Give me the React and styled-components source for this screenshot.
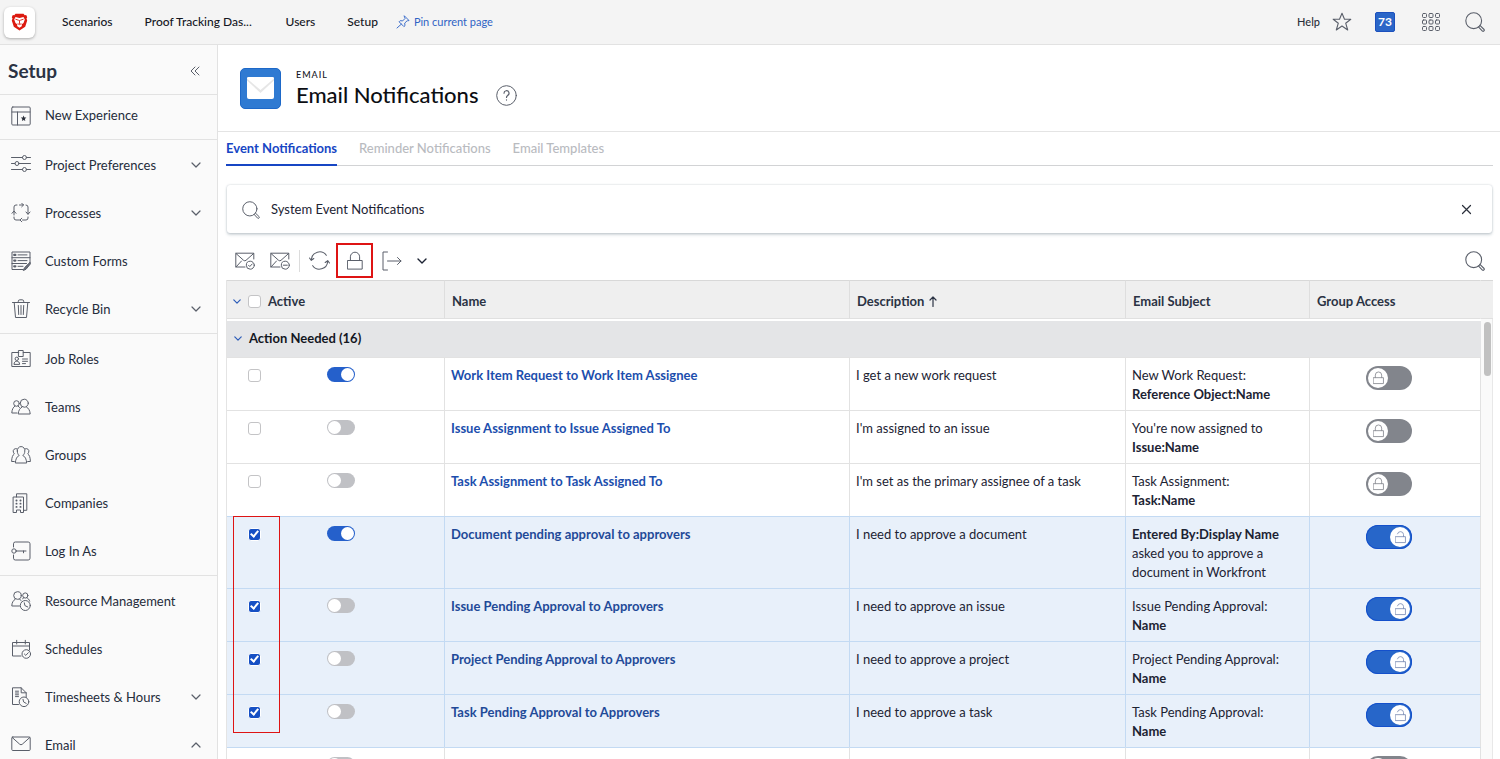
import React from "react";
import styled, { createGlobalStyle, css } from "styled-components";

const GlobalStyle = createGlobalStyle`
  *, *::before, *::after { box-sizing: border-box; }
  body {
    margin: 0;
    background: #fff;
    color: #1c2333;
    font-family: Lato, "Liberation Sans", sans-serif;
    font-size: 13px;
    line-height: 19px;
  }
  button, input { font: inherit; color: inherit; }
  h1, h2, p, ul { margin: 0; padding: 0; }
  ul { list-style: none; }
`;

/* ---------- shell ---------- */

const Shell = styled.div`
  display: flex;
  flex-direction: column;
  height: 100vh;
  overflow: hidden;
`;

const Body = styled.div`
  display: flex;
  flex: 1;
  min-height: 0;
`;

const IconButton = styled.button`
  display: inline-flex;
  align-items: center;
  justify-content: center;
  padding: 0;
  border: 0;
  background: none;
  cursor: pointer;
`;

const Glyph = styled.svg`
  display: block;
  flex: none;
  width: ${(p) => p.$w || 20}px;
  height: ${(p) => p.$h || p.$w || 20}px;
  fill: none;
  stroke: ${(p) => p.$color || "#5a5f6a"};
  stroke-width: ${(p) => p.$weight || 1};
  stroke-linecap: round;
  stroke-linejoin: round;
`;

/* ---------- top bar ---------- */

const TopBar = styled.header`
  display: flex;
  flex: none;
  align-items: center;
  height: 45px;
  padding: 0 15px 0 4px;
  border-bottom: 1px solid #e2e2e2;
  background: #f4f4f4;
`;

const Brand = styled.a`
  display: flex;
  align-items: center;
  justify-content: center;
  width: 31px;
  height: 31px;
  margin-right: 27px;
  border-radius: 6px;
  background: #fff;
  box-shadow: 0 1px 3px rgba(0, 0, 0, 0.3);
`;

const TopNav = styled.nav`
  display: flex;
  align-items: center;
  gap: 32px;
  margin-right: 18px;
`;

const TopLink = styled.a`
  min-width: ${(p) => (p.$wide ? 109 : 28)}px;
  color: #14171f;
  font-size: 12px;
  font-weight: 500;
  line-height: 16px;
  text-decoration: none;
  white-space: nowrap;
`;

const PinButton = styled(IconButton)`
  gap: 4px;
  color: #2f63c4;
  font-size: 11px;
  line-height: 16px;
`;

const TopTools = styled.div`
  display: flex;
  align-items: center;
  margin-left: auto;
`;

const HelpLink = styled.a`
  margin-right: 12px;
  color: #2b303b;
  font-size: 11px;
  font-weight: 500;
  line-height: 16px;
  text-decoration: none;
`;

const CountBadge = styled.button`
  width: 20px;
  height: 20px;
  margin: 0 26px 0 23px;
  padding: 0;
  border: 1px solid #1c50bd;
  border-radius: 2px;
  background: #2a66c8;
  color: #fff;
  font-size: 12px;
  font-weight: 700;
  line-height: 18px;
`;

const SearchButton = styled(IconButton)`
  margin-left: 24px;
`;

/* ---------- side bar ---------- */

const SideBar = styled.aside`
  flex: none;
  width: 218px;
  overflow: hidden;
  border-right: 1px solid #e2e2e2;
  background: #fafafa;
`;

const SideHead = styled.div`
  display: flex;
  align-items: center;
  justify-content: space-between;
  height: 50px;
  padding: 2px 17px 0 8px;
  border-bottom: 1px solid #e2e2e2;
`;

const SideTitle = styled.h2`
  color: #2b3344;
  font-size: 19px;
  font-weight: 700;
  line-height: 24px;
`;

const SideGroup = styled.ul`
  padding: ${(p) => (p.$compact ? "0 0 3px" : "1px 0 0")};

  & + & {
    border-top: 1px solid #e2e2e2;
  }
`;

const SideLink = styled.a`
  display: flex;
  align-items: center;
  gap: 14px;
  height: ${(p) => (p.$compact ? 41 : 48)}px;
  padding: 0 16px 0 11px;
  color: #252c3b;
  text-decoration: none;
`;

const SideLabel = styled.span`
  flex: 1;
  white-space: nowrap;
`;

/* ---------- page head and tabs ---------- */

const Main = styled.main`
  display: flex;
  flex: 1;
  flex-direction: column;
  min-width: 0;
`;

const PageHead = styled.div`
  display: flex;
  flex: none;
  align-items: center;
  gap: 15px;
  height: 87px;
  padding: 0 22px;
  border-bottom: 1px solid #e4e4e4;
`;

const PageIcon = styled.div`
  display: flex;
  align-items: center;
  justify-content: center;
  width: 41px;
  height: 41px;
  border: 1px solid #1d68c8;
  border-radius: 5px;
  background: #2f7ad2;
`;

const TitleRow = styled.div`
  display: flex;
  align-items: center;
  gap: 18px;
`;

const Eyebrow = styled.p`
  color: #14171f;
  font-size: 9px;
  font-weight: 500;
  letter-spacing: 1px;
  line-height: 14px;
`;

const PageTitle = styled.h1`
  color: #0c0e13;
  font-size: 22px;
  font-weight: 500;
  line-height: 26px;
`;

const Content = styled.div`
  display: flex;
  flex: 1;
  flex-direction: column;
  min-height: 0;
  padding: 0 7px 0 8px;
`;

const Tabs = styled.div`
  display: flex;
  flex: none;
  gap: 22px;
  height: 34px;
  border-bottom: 1px solid #d2d3d5;
`;

const Tab = styled.button`
  height: 34px;
  padding: 0;
  border: 0;
  border-bottom: 2px solid ${(p) => (p["aria-selected"] ? "#1746c4" : "transparent")};
  background: none;
  color: ${(p) => (p["aria-selected"] ? "#1746c4" : "#b9bbbf")};
  font-weight: ${(p) => (p["aria-selected"] ? 700 : 500)};
`;

/* ---------- filter card and toolbar ---------- */

const FilterCard = styled.label`
  display: flex;
  flex: none;
  align-items: center;
  gap: 11px;
  height: 48px;
  margin: 19px 1px 0;
  padding: 1px 20px 0 15px;
  border-radius: 3px;
  background: #fff;
  box-shadow: 0 0 2px rgba(60, 80, 100, 0.3), 0 2px 3px rgba(60, 80, 100, 0.22);
`;

const FilterInput = styled.input`
  flex: 1;
  min-width: 0;
  padding: 0;
  border: 0;
  outline: 0;
  background: none;
`;

const Toolbar = styled.div`
  display: flex;
  flex: none;
  align-items: center;
  height: 47px;
  padding: 8px 8px 0 9px;
`;

const ToolGroup = styled.div`
  display: flex;
  align-items: center;
  gap: 15px;
`;

const Divider = styled.span`
  width: 1px;
  height: 22px;
  margin: 0 9px;
  background: #dcdcdc;
`;

const LockButton = styled(IconButton)`
  width: 37px;
  height: 35px;
  margin: 0 9px 0 6px;
  border: 2px solid #de1414;
`;

const RightSlot = styled.div`
  display: flex;
  margin-left: auto;
`;

/* ---------- grid ---------- */

const GridArea = styled.div`
  display: flex;
  flex: 1;
  min-height: 0;
  overflow: hidden;
`;

const Table = styled.table`
  flex: 1;
  align-self: flex-start;
  width: 100%;
  table-layout: fixed;
  border-spacing: 0;
  border-left: 1px solid #e4e4e4;
`;

const Col = styled.col`
  width: ${(p) => (p.$width ? `${p.$width}px` : "auto")};
`;

const HeadCell = styled.th`
  height: 39px;
  padding: 3px 7px 0 ${(p) => (p.$first ? 6 : 7)}px;
  border-top: 1px solid #d8d8d8;
  border-right: 1px solid ${(p) => (p.$last ? "#efefef" : "#dedede")};
  border-bottom: 1px solid #e0e0e0;
  background: #efefef;
  color: #2b3344;
  font-weight: 700;
  text-align: left;
`;

const HeadInner = styled.div`
  display: flex;
  align-items: center;
  gap: ${(p) => p.$gap || 5}px;
`;

const GroupCell = styled.th`
  height: 38px;
  padding: 0 7px 2px;
  border-top: 2px solid #fff;
  background: #e4e5e7;
  color: #14171f;
  font-weight: 700;
  text-align: left;
`;

const Cell = styled.td`
  position: relative;
  padding: 8px 6px 6px;
  border-top: 1px solid #e2e2e2;
  border-right: 1px solid #e2e2e2;
  vertical-align: top;
`;

const NameLink = styled.a`
  color: #1c4ead;
  font-weight: 700;
  text-decoration: none;
`;

const Row = styled.tr`
  ${(p) =>
    p["aria-selected"] &&
    css`
      background: #e8f0fa;

      & > ${Cell} {
        border-top-color: #c3daf3;
      }
      & > ${Cell}:not(:last-child) {
        border-right-color: #c3daf3;
      }
      & + tr > ${Cell} {
        border-top-color: #c3daf3;
      }
      & ${NameLink} {
        color: #1f4a98;
      }
    `}
`;

const ActiveControls = styled.div`
  display: flex;
  align-items: flex-start;
  gap: 66px;
  padding: 1px 0 0 15px;
`;

const Tick = styled.input.attrs({ type: "checkbox" })`
  appearance: none;
  display: block;
  flex: none;
  width: 13px;
  height: 13px;
  margin: ${(p) => (p.$inRow ? "2px 0 0" : "0")};
  border: 1px solid #c4c4c6;
  border-radius: 3px;
  background: #fff;

  &:checked {
    border-color: #fff;
    background: #1650c4;
  }

  &:checked::after {
    content: "";
    display: block;
    width: 5px;
    height: 8px;
    margin: 0 auto;
    border: solid #fff;
    border-width: 0 2px 2px 0;
    transform: rotate(40deg);
  }
`;

const Switch = styled.input.attrs({ type: "checkbox", role: "switch" })`
  appearance: none;
  display: flex;
  justify-content: flex-start;
  flex: none;
  width: 28px;
  height: 15px;
  margin: 0;
  padding: 1px;
  border-radius: 8px;
  background: #c0c1c5;

  &::before {
    content: "";
    width: 13px;
    height: 13px;
    border-radius: 50%;
    background: #fff;
  }

  &:checked {
    justify-content: flex-end;
    background: #2560cb;
  }
`;

const AccessLabel = styled.label`
  display: grid;
  width: 46px;
  margin-left: 50px;
`;

const AccessInput = styled.input.attrs({ type: "checkbox", role: "switch" })`
  appearance: none;
  grid-area: 1 / 1;
  width: 46px;
  height: 24px;
  margin: 0;
  border-radius: 12px;
  background: #82858c;

  &:checked {
    background: #2766c9;
    box-shadow: inset 0 0 0 1px #1450cb;
  }
`;

const Knob = styled.span`
  display: flex;
  align-items: center;
  justify-content: center;
  grid-area: 1 / 1;
  align-self: center;
  justify-self: ${(p) => (p.$on ? "end" : "start")};
  width: 20px;
  height: 20px;
  margin: 0 2px;
  border-radius: 50%;
  background: #fff;
`;

const SelectionFrame = styled.div`
  position: absolute;
  z-index: 1;
  top: -1px;
  left: 6px;
  width: 47px;
  height: 217px;
  border: 1px solid #de1414;
  pointer-events: none;
`;

const Rail = styled.div`
  display: flex;
  flex: none;
  flex-direction: column;
  width: 12px;
`;

const RailCap = styled.div`
  height: 39px;
  border-top: 1px solid #d8d8d8;
  border-bottom: 1px solid #e0e0e0;
  background: #efefef;
`;

const RailTrack = styled.div`
  flex: 1;
  padding: 3px 0 0 3px;
  border-right: 1px solid #e8e8e8;
  background: #fafafa;
`;

const RailThumb = styled.div`
  width: 7px;
  height: 54px;
  border-radius: 4px;
  background: #c1c1c1;
`;

/* ---------- icons ---------- */

const Chevron = ({ up, small, color, weight }) => (
  <Glyph $w={small ? 8 : 10} $h={small ? 5 : 6} $color={color} $weight={weight || 1.2} viewBox="0 0 10 6">
    <path d={up ? "M1 5 5 1l4 4" : "M1 1l4 4 4-4"} />
  </Glyph>
);

const SearchIcon = ({ size = 20 }) => (
  <Glyph $w={size} viewBox="0 0 20 20" $weight={1.1}>
    <circle cx="8.7" cy="8.7" r="7.9" />
    <path d="M14.9 13.4l4.2 4.1a1.2 1.2 0 0 1-1.7 1.6l-4-4.3" />
  </Glyph>
);

const LockIcon = ({ w = 16, h = 20, open, color, weight }) => (
  <Glyph $w={w} $h={h} viewBox="0 0 16 20" $color={color} $weight={weight}>
    <rect x="0.8" y="9.5" width="14.4" height="8.6" />
    <path d={open ? "M3.6 5.4a4.5 4.5 0 0 1 8.8.9v3.2" : "M3.4 9.5V5.800a4.600 4.600 0 0 1 9.200 0v3.700"} />
  </Glyph>
);

const sideIcons = {
  experience: (
    <>
      <rect x="0.8" y="1" width="18.4" height="18" rx="1" />
      <path d="M1 6h18M6.5 6v13" />
      <path d="M12.6 9.6l.8 1.8 2 .2-1.5 1.4.4 2-1.7-1-1.7 1 .4-2-1.5-1.4 2-.2z" fill="#2b303b" stroke="none" />
    </>
  ),
  sliders: (
    <>
      <path d="M.5 2.500h11M15.500 2.500h4M.5 8.500H4M8 8.500h11.500M.5 14.500h11M15.500 14.500h4" />
      <circle cx="13.5" cy="2.5" r="2" />
      <circle cx="6" cy="8.5" r="2" />
      <circle cx="13.5" cy="14.5" r="2" />
    </>
  ),
  cycle: (
    <>
      <path d="M3 12V4a2 2 0 0 1 2-2h1M1 10.300 3 8l2 2.300" />
      <path d="M8.500 2h4M10.700.200 12.500 2l-1.800 1.800M15 2a2 2 0 0 1 2 2v7M15 9l2 2.300L19 9" />
      <path d="M17 14v1a2 2 0 0 1-2 2h-3.500M9 17H5a2 2 0 0 1-2-2v-1M10.800 15.200 9 17l1.800 1.800" />
    </>
  ),
  forms: (
    <>
      <path d="M12 18.5H1V1h18v11M1 6.7h18M1 12.5h14.5M7 3.900h9M7 9.600h9M7 15.300h5" />
      <path d="M3.200 3.900h1.200M3.200 9.600h1.200M3.200 15.300h1.200" strokeWidth="2.2" />
      <path d="M18.800 11.500l-5.300 5.200-1.200 2.800 2.700-1.200 4.300-5.300z" fill="#6a6f7a" />
    </>
  ),
  trash: (
    <path d="M1.500 3.500h17M7.300 3.500V2.200A1.500 1.500 0 0 1 8.800.8h2.400a1.500 1.500 0 0 1 1.500 1.400v1.300M3.200 3.500l1.300 15h11l1.300-15M7.300 6.500l.4 9M10 6.500v9M12.700 6.500l-.4 9" />
  ),
  badge: (
    <>
      <path d="M7.800 3.500H.8v14h18.400v-14h-7" />
      <rect x="7.800" y="1.500" width="4.4" height="6" />
      <circle cx="5.8" cy="9.8" r="1.7" />
      <path d="M3 15c.2-2 1.300-2.800 2.800-2.800S8.400 13 8.600 15zM11.500 10h5M11.500 12.300h5M11.500 14.600h3" />
    </>
  ),
  team: (
    <>
      <circle cx="13.3" cy="6.2" r="4" />
      <path d="M11 10c-2.300 1.300-3.500 3.600-3.800 7h12c-.3-3.400-1.400-5.700-3.700-7" />
      <circle cx="5.5" cy="6.5" r="2.8" />
      <path d="M6 16H.8c.2-3.500 1.200-5.500 3.100-7M7 9l1.500 1.500" />
    </>
  ),
  group: (
    <>
      <path d="M6.300 6a3.800 3.800 0 1 1 7.500 0c0 2-.8 3.600-2 4.500 2.400 1 3.500 3.500 3.900 7.500H4.300c.4-4 1.500-6.500 3.900-7.500C7 9.600 6.300 8 6.300 6z" />
      <path d="M5.800 3.800a2.600 2.600 0 0 0-3.400 3.400c.3.9.6 1.300 1 1.700C1.700 10 .8 12 .6 16.500h2.700M14.300 3.800a2.600 2.600 0 0 1 3.400 3.400c-.3.9-.6 1.300-1 1.700 1.700 1.100 2.500 3.100 2.700 7.600h-2.700" />
    </>
  ),
  building: (
    <>
      <path d="M2.500 4h10v15.500H9.500V17h-4v2.500h-3zM5.500 4V.8h10.300v16.500h-3" />
      <path d="M5.400 7.500h.2M9.400 7.500h.2M5.400 10.700h.2M9.400 10.700h.2M5.400 13.900h.2M9.400 13.900h.2" strokeWidth="1.8" />
    </>
  ),
  key: (
    <>
      <path d="M2.500 6V2.800A1.800 1.800 0 0 1 4.300 1h12.900A1.800 1.800 0 0 1 19 2.800v14.400a1.800 1.800 0 0 1-1.800 1.800H4.300a1.800 1.800 0 0 1-1.800-1.800V14M5.500 10H15M12.500 10v1.800" />
      <circle cx="3" cy="10" r="2.2" />
    </>
  ),
  resource: (
    <>
      <circle cx="6.5" cy="4.5" r="3.8" />
      <path d="M8.500 15H.8c.1-3.400 1.300-5.400 3.500-6.900M8.500 8.100l1.700 1.500" />
      <circle cx="14.3" cy="4.5" r="2.6" />
      <path d="M15.800 6.800c1.500.7 2.400 1.700 2.900 3.400M12.800 6.800l-1.200.9" />
      <circle cx="14.3" cy="14.5" r="5" />
      <path d="M13.300 11.800l.6 2.800 2.900 1.400" />
    </>
  ),
  calendar: (
    <>
      <path d="M10 17H1.500V3.500h17V11M1.500 7h17M5.700 1.300V5M14.300 1.300V5" />
      <circle cx="15.3" cy="15" r="4.3" />
      <path d="M13.400 15l1.400 1.400 2.500-2.700" />
    </>
  ),
  timesheet: (
    <>
      <path d="M7.500 17.500h-6V.8h8.700l5 5v4.500M10.200.8v5h5M4.500 4.200h3M4.500 6h3M4.500 7.800h3M4.500 9.600h3" />
      <circle cx="13" cy="14.8" r="4.8" />
      <path d="M12 12.300l.6 2.600 2.600 1.500" />
    </>
  ),
  mail: (
    <>
      <rect x="0.8" y="2" width="18.4" height="13.5" rx="1" />
      <path d="M1.200 2.500 8.700 9.200a1.900 1.900 0 0 0 2.600 0l7.500-6.700" />
    </>
  ),
};

const MailAction = ({ kind }) => (
  <Glyph $w={20} $h={18} viewBox="0 0 20 18">
    <path d="M10 15H.8V1.200h18V7M1 1.500l7.600 6.800a1.800 1.800 0 0 0 2.400 0l7.600-6.800M1 15l5.500-6" />
    <circle cx="15.3" cy="13.2" r="4" />
    <path d={kind === "check" ? "M13.500 13.200l1.300 1.300 2.400-2.500" : "M13.300 13.200h4"} />
  </Glyph>
);

/* ---------- data ---------- */

const sideGroups = [
  [["New Experience", "experience"]],
  [
    ["Project Preferences", "sliders", "down"],
    ["Processes", "cycle", "down"],
    ["Custom Forms", "forms"],
    ["Recycle Bin", "trash", "down"],
  ],
  [
    ["Job Roles", "badge"],
    ["Teams", "team"],
    ["Groups", "group"],
    ["Companies", "building"],
    ["Log In As", "key"],
  ],
  [
    ["Resource Management", "resource"],
    ["Schedules", "calendar"],
    ["Timesheets & Hours", "timesheet", "down"],
    ["Email", "mail", "up"],
  ],
];

const rows = [
  { name: "Work Item Request to Work Item Assignee", text: "I get a new work request", subject: <>New Work Request:<br /><b>Reference Object:Name</b></>, active: true },
  { name: "Issue Assignment to Issue Assigned To", text: "I'm assigned to an issue", subject: <>You're now assigned to<br /><b>Issue:Name</b></> },
  { name: "Task Assignment to Task Assigned To", text: "I'm set as the primary assignee of a task", subject: <>Task Assignment:<br /><b>Task:Name</b></> },
  { name: "Document pending approval to approvers", text: "I need to approve a document", subject: <><b>Entered By:Display Name</b><br />asked you to approve a<br />document in Workfront</>, active: true, selected: true, framed: true },
  { name: "Issue Pending Approval to Approvers", text: "I need to approve an issue", subject: <>Issue Pending Approval:<br /><b>Name</b></>, selected: true },
  { name: "Project Pending Approval to Approvers", text: "I need to approve a project", subject: <>Project Pending Approval:<br /><b>Name</b></>, selected: true },
  { name: "Task Pending Approval to Approvers", text: "I need to approve a task", subject: <>Task Pending Approval:<br /><b>Name</b></>, selected: true },
  {},
];

/* ---------- parts ---------- */

const TopBarPart = () => (
  <TopBar>
    <Brand href="#" aria-label="Home">
      <Glyph $w={17} $h={18} viewBox="0 0 17 18">
        <path d="M4.500.8h8l1.200 1.400 1.500-.2 1 2.300-.7 1.300.7 1.800-2 6.300L8.500 17.500l-5.700-3.800-2-6.300.7-1.800-.7-1.300 1-2.300 1.500.2z" fill="#dc1a10" stroke="none" />
        <path d="M4.500 4l4 1 4-1 1.300 2.500-1.300 3.500-2 1.500.5 1.500-2.500 1.700L6 13l.5-1.500-2-1.500L3.200 6.500z" fill="#fff" stroke="none" />
        <path d="M4.800 6.300l2.700.9M12.200 6.300l-2.700.9M7 10.800l1.500.8 1.500-.8M8.500 7.500v3" stroke="#dc1a10" strokeWidth="0.9" />
      </Glyph>
    </Brand>
    <TopNav>
      <TopLink href="#">Scenarios</TopLink>
      <TopLink href="#" $wide>Proof Tracking Das...</TopLink>
      <TopLink href="#">Users</TopLink>
      <TopLink href="#">Setup</TopLink>
    </TopNav>
    <PinButton>
      <Glyph $w={14} $color="#3d6ecb" viewBox="0 0 14 14">
        <path d="M8.500 1 13 5.500l-1.300.4-.4-.3-2.600 2.500.3 2.500-1.100 1L3.100 6.800l1.100-1.100 2.500.2 2.400-2.500-.4-.6zM5.400 9.100 1 13" />
      </Glyph>
      Pin current page
    </PinButton>
    <TopTools>
      <HelpLink href="#">Help</HelpLink>
      <IconButton aria-label="Favorites">
        <Glyph $w={20} viewBox="0 0 20 20" $weight={1.1}>
          <path d="M10 1.200l2.500 6h6.300l-5.100 4 2 6.800-5.700-4-5.700 4 2-6.800-5.100-4h6.300z" />
        </Glyph>
      </IconButton>
      <CountBadge aria-label="73 notifications">73</CountBadge>
      <IconButton aria-label="Main menu">
        <Glyph $w={20} viewBox="0 0 20 20">
          {[1.5, 8, 14.5].map((y) =>
            [1.5, 8, 14.5].map((x) => <rect key={`${x}-${y}`} x={x} y={y} width="4" height="4" rx="1" />)
          )}
        </Glyph>
      </IconButton>
      <SearchButton aria-label="Search">
        <SearchIcon />
      </SearchButton>
    </TopTools>
  </TopBar>
);

const SidePart = () => (
  <SideBar>
    <SideHead>
      <SideTitle>Setup</SideTitle>
      <IconButton aria-label="Collapse">
        <Glyph $w={10} viewBox="0 0 10 10">
          <path d="M5 1 1 5l4 4M9 1 5 5l4 4" />
        </Glyph>
      </IconButton>
    </SideHead>
    {sideGroups.map((group, i) => (
      <SideGroup key={i} $compact={i === 0}>
        {group.map(([label, icon, arrow]) => (
          <li key={label}>
            <SideLink href="#" $compact={i === 0}>
              <Glyph viewBox="0 0 20 20">{sideIcons[icon]}</Glyph>
              <SideLabel>{label}</SideLabel>
              {arrow && <Chevron up={arrow === "up"} />}
            </SideLink>
          </li>
        ))}
      </SideGroup>
    ))}
  </SideBar>
);

const GridRow = ({ row }) => (
  <Row aria-selected={!!row.selected}>
    <Cell>
      <ActiveControls>
        <Tick $inRow defaultChecked={row.selected} aria-label={`Select ${row.name || "row"}`} />
        <Switch defaultChecked={row.active} aria-label={`Activate ${row.name || "row"}`} />
      </ActiveControls>
      {row.framed && <SelectionFrame />}
    </Cell>
    <Cell>{row.name && <NameLink href="#">{row.name}</NameLink>}</Cell>
    <Cell>{row.text}</Cell>
    <Cell>{row.subject}</Cell>
    <Cell>
      <AccessLabel>
        <AccessInput defaultChecked={row.selected} aria-label="Group access" />
        <Knob $on={row.selected}>
          <LockIcon w={11} h={14} open={row.selected} color={row.selected ? "#8293b8" : "#8c8f95"} weight={1.3} />
        </Knob>
      </AccessLabel>
    </Cell>
  </Row>
);

export default function App() {
  return (
    <Shell>
      <GlobalStyle />
      <TopBarPart />
      <Body>
        <SidePart />
        <Main>
          <PageHead>
            <PageIcon>
              <Glyph $w={27} $h={22} viewBox="0 0 27 22">
                <rect width="27" height="22" rx="2" fill="#fff" stroke="none" />
                <path d="M0 3.500 13.500 16 27 3.500V2a2 2 0 0 0-2-2H2a2 2 0 0 0-2 2z" fill="#e6e6e6" stroke="none" />
                <path d="M0 1.500 13.500 13 27 1.500A2 2 0 0 0 25 0H2a2 2 0 0 0-2 1.500z" fill="#fff" stroke="none" />
              </Glyph>
            </PageIcon>
            <div>
              <Eyebrow>EMAIL</Eyebrow>
              <TitleRow>
                <PageTitle>Email Notifications</PageTitle>
                <IconButton aria-label="Help">
                  <Glyph $w={21} viewBox="0 0 21 21">
                    <circle cx="10.5" cy="10.5" r="9.8" />
                    <path d="M8 8.200a2.500 2.500 0 1 1 3.700 2.200c-.8.500-1.200.9-1.200 2M10.500 14.800v.3" strokeWidth="1.2" />
                  </Glyph>
                </IconButton>
              </TitleRow>
            </div>
          </PageHead>
          <Content>
            <Tabs role="tablist">
              <Tab role="tab" aria-selected={true}>Event Notifications</Tab>
              <Tab role="tab" aria-selected={false}>Reminder Notifications</Tab>
              <Tab role="tab" aria-selected={false}>Email Templates</Tab>
            </Tabs>
            <FilterCard>
              <SearchIcon size={18} />
              <FilterInput aria-label="Filter" defaultValue="System Event Notifications" />
              <IconButton aria-label="Clear">
                <Glyph $w={11} viewBox="0 0 11 11" $weight={1.2} $color="#2b303b">
                  <path d="M1.500 1.500l8 8M9.500 1.500l-8 8" />
                </Glyph>
              </IconButton>
            </FilterCard>
            <Toolbar>
              <ToolGroup>
                <IconButton aria-label="Activate"><MailAction kind="check" /></IconButton>
                <IconButton aria-label="Deactivate"><MailAction kind="minus" /></IconButton>
              </ToolGroup>
              <Divider />
              <IconButton aria-label="Reset">
                <Glyph $w={21} viewBox="0 0 21 21" $weight={1.1}>
                  <path d="M2.300 9.500a8.300 8.300 0 0 1 15-4.200M18.700 11.500a8.300 8.300 0 0 1-15 4.200M.5 8l1.800 2.300L4.800 8.500M20.500 13l-1.800-2.300-2.500 1.800" />
                </Glyph>
              </IconButton>
              <LockButton aria-label="Lock">
                <LockIcon />
              </LockButton>
              <ToolGroup>
                <IconButton aria-label="Export">
                  <Glyph $w={20} viewBox="0 0 20 20">
                    <path d="M5.500 1H1v18h4.500M5.500 10H19M15.500 6.500 19 10l-3.500 3.500" />
                  </Glyph>
                </IconButton>
                <IconButton aria-label="More export options">
                  <Chevron weight={1.4} color="#1c2333" />
                </IconButton>
              </ToolGroup>
              <RightSlot>
                <IconButton aria-label="Search list"><SearchIcon /></IconButton>
              </RightSlot>
            </Toolbar>
            <GridArea>
              <Table>
                <colgroup>
                  <Col $width={218} />
                  <Col />
                  <Col $width={276} />
                  <Col $width={184} />
                  <Col $width={171} />
                </colgroup>
                <thead>
                  <tr>
                    <HeadCell $first>
                      <HeadInner $gap={7}>
                        <Chevron small color="#2c5cb8" weight={1.5} />
                        <Tick aria-label="Select all" />
                        Active
                      </HeadInner>
                    </HeadCell>
                    <HeadCell>Name</HeadCell>
                    <HeadCell>
                      <HeadInner>
                        Description
                        <Glyph $w={8} $h={11} viewBox="0 0 8 11" $color="#2b3344" $weight={1.2}>
                          <path d="M4 10.500V1M1 4l3-3 3 3" />
                        </Glyph>
                      </HeadInner>
                    </HeadCell>
                    <HeadCell>Email Subject</HeadCell>
                    <HeadCell $last>Group Access</HeadCell>
                  </tr>
                </thead>
                <tbody>
                  <tr>
                    <GroupCell colSpan={5}>
                      <HeadInner $gap={7}>
                        <Chevron small color="#2c5cb8" weight={1.5} />
                        Action Needed (16)
                      </HeadInner>
                    </GroupCell>
                  </tr>
                  {rows.map((row, i) => (
                    <GridRow key={i} row={row} />
                  ))}
                </tbody>
              </Table>
              <Rail>
                <RailCap />
                <RailTrack>
                  <RailThumb />
                </RailTrack>
              </Rail>
            </GridArea>
          </Content>
        </Main>
      </Body>
    </Shell>
  );
}
